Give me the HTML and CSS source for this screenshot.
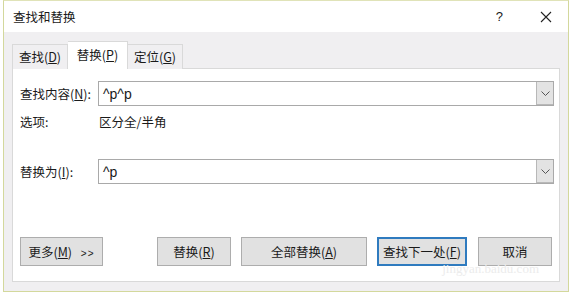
FILE: index.html
```html
<!DOCTYPE html>
<html lang="zh-CN">

<head>
    <meta charset="UTF-8">
    <title>查找和替换</title>
    <link rel="stylesheet" href="styles.css">
</head>

<body>
    <div class="window">
        <!-- 标题栏 -->
        <div class="titlebar">
            <span class="title">查找和替换</span>
            <span class="help">?</span>
            <span class="close">
                <svg width="12" height="12" viewBox="0 0 12 12">
                    <path d="M1 1 L11 11 M11 1 L1 11" stroke="#222" stroke-width="1.1" fill="none" />
                </svg>
            </span>
        </div>

        <div class="client">
            <!-- 选项卡 -->
            <div class="tabs">
                <div class="tab tab-find">查找(<u>D</u>)</div>
                <div class="tab tab-replace active">替换(<u>P</u>)</div>
                <div class="tab tab-goto">定位(<u>G</u>)</div>
            </div>

            <div class="panel">
                <div class="field find-row">
                    <label>查找内容(<u>N</u>):</label>
                    <div class="combo">
                        <span class="combo-text">^p^p</span>
                        <span class="combo-btn">
                            <svg width="9" height="5" viewBox="0 0 9 5">
                                <path d="M0.5 0.5 L4.5 4.5 L8.5 0.5" stroke="#555" fill="none" />
                            </svg>
                        </span>
                    </div>
                </div>

                <div class="field options-row">
                    <label>选项:</label>
                    <div class="options">区分全/半角</div>
                </div>

                <div class="field replace-row">
                    <label>替换为(<u>I</u>):</label>
                    <div class="combo">
                        <span class="combo-text">^p</span>
                        <span class="combo-btn">
                            <svg width="9" height="5" viewBox="0 0 9 5">
                                <path d="M0.5 0.5 L4.5 4.5 L8.5 0.5" stroke="#555" fill="none" />
                            </svg>
                        </span>
                    </div>
                </div>

                <!-- 按钮 -->
                <div class="buttons">
                    <button class="btn btn-more">更多(<u>M</u>) <span class="arrows">&gt;&gt;</span></button>
                    <button class="btn btn-replace">替换(<u>R</u>)</button>
                    <button class="btn btn-all">全部替换(<u>A</u>)</button>
                    <button class="btn btn-next default">查找下一处(<u>F</u>)</button>
                    <button class="btn btn-cancel">取消</button>
                </div>

                <div class="watermark">jingyan.baidu.com</div>
            </div>
        </div>
    </div>
</body>

</html>
```

FILE: styles.css
```css
body {
    margin: 0;
    width: 572px;
    height: 297px;
    overflow: hidden;
    background-color: #fff;
    font-family: "Noto Sans CJK SC", "Liberation Sans", sans-serif;
    font-size: 12px;
    color: #1a1a1a;
}

.window {
    margin-left: 3px;
    width: 564px;
    height: 290px;
    border: 1px solid #d3d89c;
    border-top-color: #e0e3b8;
    display: flex;
    flex-direction: column;
}

.titlebar {
    height: 31px;
    background-color: #fff;
    display: flex;
    align-items: center;
    padding-left: 9px;
}

.title {
    font-size: 12.5px;
    flex: 1;
}

.help {
    font-family: "Liberation Sans", sans-serif;
    font-size: 13px;
    margin-right: 37px;
}

.close {
    display: flex;
    margin-right: 16px;
}

.client {
    flex: 1;
    background-color: #f0eff1;
    padding: 9px 8px 9px 8px;
    display: flex;
    flex-direction: column;
}

.tabs {
    display: flex;
    align-items: flex-end;
    height: 28px;
    margin-bottom: -1px;
    position: relative;
    z-index: 1;
}

.tab {
    box-sizing: border-box;
    height: 25px;
    line-height: 23px;
    white-space: nowrap;
    text-align: center;
    border: 1px solid #d9d9d9;
    border-bottom: none;
    background-color: #f0eff1;
    font-size: 12.5px;
}

.tab-find {
    width: 56px;
}

.tab-replace {
    width: 60px;
    border-left: none;
}

.tab-goto {
    width: 55px;
    border-left: none;
}

.tab.active {
    height: 28px;
    line-height: 26px;
    background-color: #fff;
    border-right: 1px solid #d9d9d9;
}

.panel {
    flex: 1;
    background-color: #fff;
    border: 1px solid #d9d9d9;
    padding: 12px 5px 0 7px;
    position: relative;
}

.field {
    display: grid;
    grid-template-columns: 78px 1fr;
    align-items: center;
}

.field label {
    font-size: 12.5px;
}

.combo {
    height: 23px;
    border: 1px solid #a9a9a9;
    display: flex;
    align-items: center;
}

.combo-text {
    flex: 1;
    padding-left: 4px;
    font-family: "Liberation Sans", sans-serif;
    font-size: 14px;
}

.combo-btn {
    width: 16px;
    height: 22px;
    background-color: #e3e3e3;
    border: 1px solid #b8b8b8;
    border-top: none;
    border-right: none;
    display: flex;
    align-items: center;
    justify-content: center;
}

.options-row {
    margin-top: 2px;
    height: 26px;
}

.options {
    padding-left: 1px;
    font-size: 12.5px;
}

.replace-row {
    margin-top: 25px;
}

.buttons {
    display: flex;
    margin-top: 53px;
}

.btn {
    height: 29px;
    background-color: #e1e1e1;
    border: 1px solid #adadad;
    font-family: inherit;
    font-size: 12.5px;
    color: #1a1a1a;
    padding: 0;
}

.btn-more {
    width: 83px;
    margin-right: 54px;
}

.arrows {
    font-family: "Liberation Sans", sans-serif;
    font-size: 10px;
    margin-left: 6px;
    letter-spacing: 1px;
}

.btn-replace {
    width: 74px;
    margin-right: 10px;
}

.btn-all {
    width: 126px;
    margin-right: 10px;
}

.btn-next {
    width: 90px;
    margin-right: 11px;
}

.btn.default {
    border-color: #2f7bbf;
    box-shadow: inset 0 0 0 1px #2f7bbf;
}

.btn-cancel {
    width: 74px;
}

.watermark {
    position: absolute;
    right: 20px;
    bottom: 4px;
    font-family: "Liberation Serif", serif;
    font-size: 13px;
    color: #ececec;
}
```
